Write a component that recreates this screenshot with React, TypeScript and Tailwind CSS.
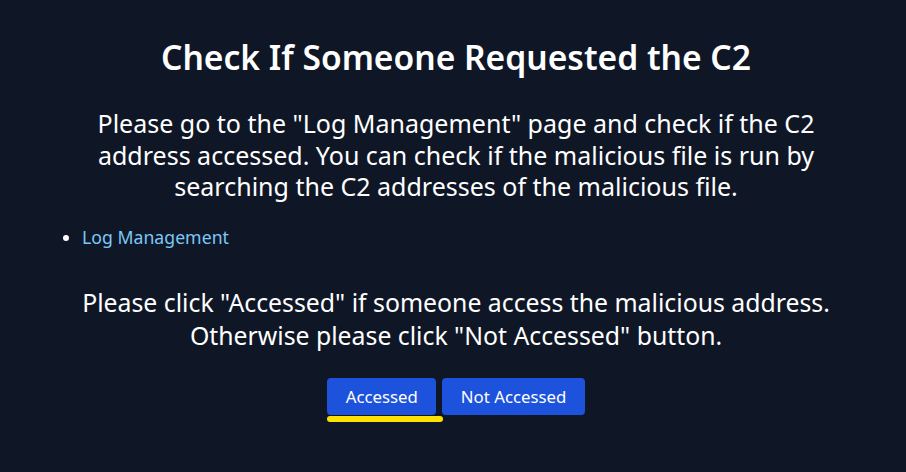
export default function App() {
  return (
    <div
      className="min-h-screen bg-[#0f1727] text-white"
      style={{ fontFamily: '"Noto Sans", "Open Sans", sans-serif' }}
    >
      <div className="pl-[46px] pr-[40px] pt-[35px]">
        <h1 className="text-center text-[33.6px] font-semibold leading-[44px]">
          Check If Someone Requested the C2
        </h1>
        <p className="mx-auto mt-[29px] max-w-[770px] text-center text-[25px] leading-[31.5px]">
          Please go to the "Log Management" page and check if the C2 address accessed. You can
          check if the malicious file is run by searching the C2 addresses of the malicious file.
        </p>
        <ul className="mt-[22.5px] list-disc pl-[36px] text-[17.7px] leading-[24px] marker:text-white">
          <li>
            <a href="#" className="text-[#7cc8f5]">
              Log Management
            </a>
          </li>
        </ul>
        <p className="mt-[36.5px] text-center text-[24.8px] leading-[33px]">
          Please click "Accessed" if someone access the malicious address.
          <br />
          Otherwise please click "Not Accessed" button.
        </p>
        <div className="mt-[26.5px] flex justify-center gap-[6px]">
          <div className="relative">
            <button className="h-[37px] rounded-[4px] bg-[#1d52dc] px-[18.5px] text-[16.8px] text-white">
              Accessed
            </button>
            <div className="absolute left-0 top-[38px] h-[6px] w-[116px] rounded-full bg-[#ffe100]" />
          </div>
          <button className="h-[37px] rounded-[4px] bg-[#1d52dc] px-[18.5px] text-[16.8px] text-white">
            Not Accessed
          </button>
        </div>
      </div>
    </div>
  );
}
